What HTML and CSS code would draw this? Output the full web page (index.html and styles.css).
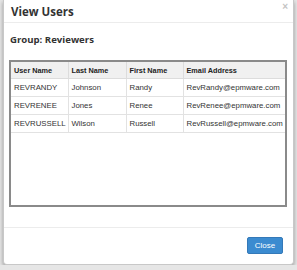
FILE: index.html
```html
<!DOCTYPE html>
<html lang="en">
<head>
    <meta charset="UTF-8">
    <title>View Users</title>
    <link rel="stylesheet" href="styles.css">
</head>
<body>
    <div class="modal">
        <div class="modal-header">
            <h4 class="modal-title">View Users</h4>
            <span class="close-x">&times;</span>
        </div>
        <div class="modal-body">
            <div class="group-label">Group: Reviewers</div>
            <div class="grid-box">
                <table class="users">
                    <colgroup>
                        <col class="c1"><col class="c2"><col class="c3"><col class="c4">
                    </colgroup>
                    <thead>
                        <tr><th>User Name</th><th>Last Name</th><th>First Name</th><th>Email Address</th></tr>
                    </thead>
                    <tbody>
                        <tr><td>REVRANDY</td><td>Johnson</td><td>Randy</td><td>RevRandy@epmware.com</td></tr>
                        <tr><td>REVRENEE</td><td>Jones</td><td>Renee</td><td>RevRenee@epmware.com</td></tr>
                        <tr><td>REVRUSSELL</td><td>Wilson</td><td>Russell</td><td>RevRussell@epmware.com</td></tr>
                    </tbody>
                </table>
            </div>
        </div>
        <div class="modal-footer">
            <button class="btn-close">Close</button>
        </div>
    </div>
</body>
</html>
```

FILE: styles.css
```css
body {
    margin: 0;
    background-color: #e6e6e6;
    font-family: "Liberation Sans", Arial, sans-serif;
}
.modal {
    margin: 0 3px;
    height: 265px;
    background: #fff;
    border: 1px solid #c8c8c8;
    border-top: none;
    border-radius: 0 0 4px 4px;
    box-shadow: 0 2px 4px rgba(0, 0, 0, 0.35);
    box-sizing: border-box;
    display: flex;
    flex-direction: column;
}
.modal-header {
    height: 22px;
    border-bottom: 1px solid #ececec;
    display: flex;
    align-items: center;
    justify-content: space-between;
    padding: 0 5px 0 7px;
}
.modal-title {
    margin: 0;
    font-family: "Open Sans", sans-serif;
    font-size: 11.5px;
    font-weight: 700;
    color: #333;
}
.close-x {
    font-size: 10px;
    font-weight: bold;
    color: #c4c4c4;
    align-self: flex-start;
    margin-top: 1px;
}
.modal-body {
    flex: 1;
    padding: 10px 6px 0 5px;
}
.group-label {
    font-family: "Open Sans", sans-serif;
    font-size: 9.6px;
    font-weight: 700;
    color: #333;
    line-height: 14px;
    padding-left: 1px;
}
.grid-box {
    margin-top: 13px;
    height: 147px;
    border: 2px solid #8a8a8a;
    box-sizing: border-box;
}
.users {
    width: 100%;
    table-layout: fixed;
    border-collapse: collapse;
    font-size: 7.8px;
    color: #333;
}
.users .c1 { width: 57px; }
.users .c2 { width: 58px; }
.users .c3 { width: 57px; }
.users th {
    background: #f0f0f0;
    font-weight: bold;
    font-size: 7.3px;
    color: #222;
    text-align: left;
    height: 16px;
    padding: 0 3px;
    border: 1px solid #dcdcdc;
    border-top: none;
}
.users td {
    height: 17px;
    padding: 0 3px;
    border: 1px solid #e2e2e2;
    white-space: nowrap;
}
.users th:first-child, .users td:first-child { border-left: none; }
.users th:last-child, .users td:last-child { border-right: none; }
.modal-footer {
    height: 37px;
    border-top: 1px solid #ececec;
    display: flex;
    justify-content: flex-end;
    align-items: flex-start;
    padding: 9px 10px 0 0;
    box-sizing: border-box;
}
.btn-close {
    width: 36px;
    height: 17px;
    padding: 0;
    background: #3b8bd0;
    border: 1px solid #3479b8;
    border-radius: 2px;
    color: #fff;
    font-family: "Liberation Sans", Arial, sans-serif;
    font-size: 8px;
}
```
